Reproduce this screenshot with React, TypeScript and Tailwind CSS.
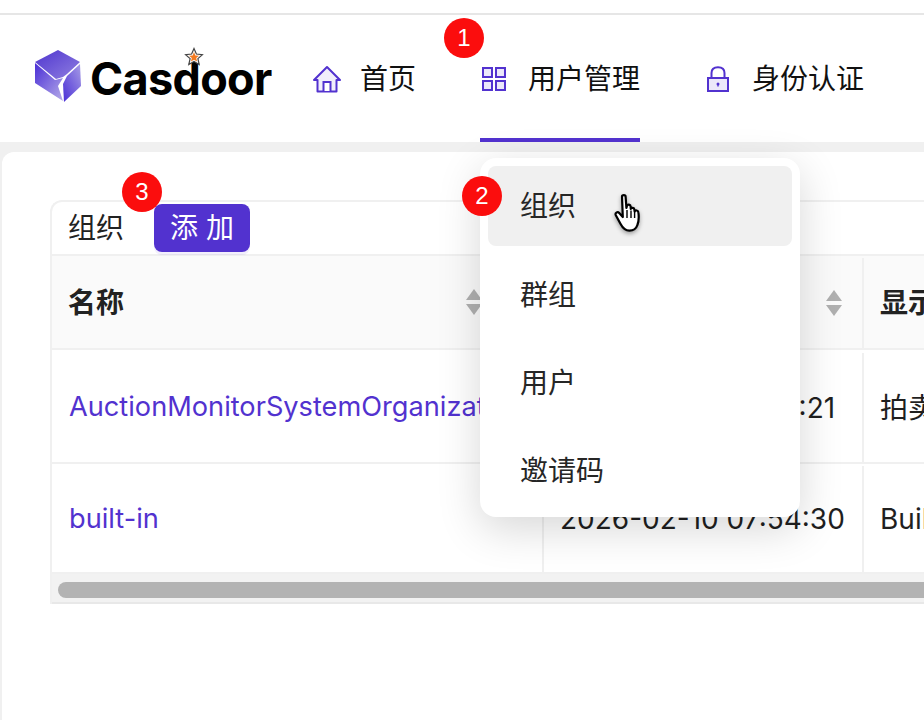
import React from "react";

const cjk = "font-['Inter','Noto_Sans_CJK_SC',sans-serif]";

function Logo() {
  return (
    <div className="relative flex items-center w-[312px] pl-[34px]">
      <svg width="48" height="54" viewBox="0 0 48 54" className="shrink-0 -mt-[3px]">
        <defs>
          <linearGradient id="cubeTop" x1="0" y1="0" x2="1" y2="1">
            <stop offset="0" stopColor="#4f35cf" />
            <stop offset="1" stopColor="#8f7fe0" />
          </linearGradient>
          <linearGradient id="cubeLeft" x1="0" y1="0" x2="1" y2="1">
            <stop offset="0" stopColor="#4a2fd6" />
            <stop offset="1" stopColor="#b5abe8" />
          </linearGradient>
          <linearGradient id="cubeRight" x1="1" y1="0" x2="0" y2="1">
            <stop offset="0" stopColor="#a79ce6" />
            <stop offset="1" stopColor="#4a2fd6" />
          </linearGradient>
        </defs>
        <path d="M1 12 L24 0 L46 12 L33 24 L29 27 L22 29 Z" fill="url(#cubeTop)" />
        <path d="M1 13 L21 30 L29 28 L24 36 L29 51 L1 33 Z" fill="url(#cubeLeft)" />
        <path d="M46 14 L47 36 L30 52 L29 34 L33 26 Z" fill="url(#cubeRight)" />
      </svg>
      <span className="ml-[8px] font-['Inter',sans-serif] font-bold text-[45px] leading-none tracking-[-0.7px] text-black">
        Casdoor
      </span>
      <svg width="20" height="20" viewBox="0 0 20 20" className="absolute left-[184px] top-[-6px]">
        <path
          d="M10 1.5 L12.4 7 L18.4 7.6 L13.9 11.6 L15.2 17.5 L10 14.4 L4.8 17.5 L6.1 11.6 L1.6 7.6 L7.6 7 Z"
          fill="#fff"
          stroke="#444"
          strokeWidth="1.2"
        />
        <path
          d="M10 5 L11.3 8.4 L15 8.7 L12.2 11 L13.1 14.6 L10 12.7 L6.9 14.6 L7.8 11 L5 8.7 L8.7 8.4 Z"
          fill="#f47a20"
        />
      </svg>
    </div>
  );
}

function HouseIcon() {
  return (
    <svg width="30" height="28" viewBox="0 0 30 28" fill="none">
      <path
        d="M15 2 L28 15 H24.5 V26.5 H5.5 V15 H2 Z"
        fill="#f1eefb"
        stroke="#5232cf"
        strokeWidth="2"
        strokeLinejoin="round"
      />
      <path d="M11.5 26 V17 H18.5 V26" fill="#fff" stroke="#5232cf" strokeWidth="2" />
    </svg>
  );
}

function GridIcon() {
  return (
    <svg width="24" height="24" viewBox="0 0 24 24" fill="#ece8fa" stroke="#5232cf" strokeWidth="2">
      <rect x="1" y="1" width="9" height="9" />
      <rect x="14" y="1" width="9" height="9" />
      <rect x="1" y="14" width="9" height="9" />
      <rect x="14" y="14" width="9" height="9" />
    </svg>
  );
}

function LockIcon() {
  return (
    <svg width="22" height="26" viewBox="0 0 22 26" fill="none">
      <path d="M4.5 12 V7 C4.5 3 7 1.2 11 1.2 C15 1.2 17.5 3 17.5 7 V12" stroke="#5232cf" strokeWidth="2" />
      <rect x="1" y="12" width="20" height="13" fill="#ece8fa" stroke="#5232cf" strokeWidth="2" />
      <circle cx="11" cy="18" r="1.5" fill="#5232cf" />
      <rect x="10.4" y="18" width="1.2" height="2.6" fill="#5232cf" />
    </svg>
  );
}

function Badge({ n, className }: { n: number; className: string }) {
  return (
    <div
      className={`absolute w-10 h-10 rounded-full bg-[#fb0d0d] flex items-center justify-center text-white text-[24px] font-['Liberation_Sans',sans-serif] ${className}`}
    >
      {n}
    </div>
  );
}

function SortIcon() {
  return (
    <svg width="18" height="26" viewBox="0 0 18 26" fill="#b0b0b0">
      <path d="M9 0 L17 11 H1 Z" />
      <path d="M1 15 H17 L9 26 Z" />
    </svg>
  );
}

function HandCursor() {
  return (
    <svg width="32" height="42" viewBox="0 0 32 42" className="absolute left-[613px] top-[193px] drop-shadow-[0_2px_2px_rgba(0,0,0,0.35)]">
      <path
        d="M9 3.5 C9 1.6 12.6 1.6 12.6 3.5 L13.4 15 L14 12.8 C14.6 11 17.6 11.4 17.6 13.4 L17.8 16 C18.4 14.2 21.2 14.6 21.4 16.6 L21.6 18.4 C22.4 16.8 25.2 17.4 25.4 19.4 C26 24 25.6 29 24.4 32 C23.4 35 20.6 37.6 16.4 37.6 C12 37.6 9.6 34.8 7.6 31 L2.8 22.2 C1.8 20.2 4.4 18 6.2 20 L9.8 24 Z"
        fill="#fff"
        stroke="#000"
        strokeWidth="2.2"
        strokeLinejoin="round"
      />
      <path d="M14 17 V25 M18 17.5 V25 M21.6 19 V25" stroke="#000" strokeWidth="1.4" />
    </svg>
  );
}

function Row({ h, name, time, display }: { h: string; name: string; time: string; display: string }) {
  return (
    <div className={`grid grid-cols-[492px_320px_1fr] border-b-2 border-[#f0f0f0] ${h}`}>
      <div className="flex items-center pl-[17px] border-r-2 border-[#f0f0f0] text-[#5232cf] text-[27.2px] whitespace-nowrap overflow-hidden">
        {name}
      </div>
      <div className="flex items-center pl-[16px] border-r-2 border-[#f0f0f0] text-[#1f1f1f] whitespace-nowrap">
        {time}
      </div>
      <div className="flex items-center pl-[16px] text-[#1f1f1f] whitespace-nowrap">{display}</div>
    </div>
  );
}

export default function App() {
  return (
    <div className={`relative h-[720px] w-[924px] overflow-hidden bg-white ${cjk} text-[28px]`}>
      {/* top bar */}
      <div className="h-[15px] border-b-2 border-[#e6e6e6]" />
      <header className="flex items-center h-[127px] bg-white text-[#111]">
        <Logo />
        <nav className="flex h-full items-center">
          <div className="flex items-center h-full w-[168px]">
            <HouseIcon />
            <span className="ml-[18px]">首页</span>
          </div>
          <div className="flex items-center h-full w-[160px] pl-[2px] pt-[4px] border-b-4 border-[#5232cf]">
            <GridIcon />
            <span className="ml-[22px] whitespace-nowrap">用户管理</span>
          </div>
          <div className="flex items-center h-full ml-[67px]">
            <LockIcon />
            <span className="ml-[23px] whitespace-nowrap">身份认证</span>
          </div>
        </nav>
      </header>

      {/* page body */}
      <div className="bg-[#f0f0f0] pt-[10px] pl-[2px] h-[578px]">
        <div className="bg-white rounded-tl-xl h-full pt-[48px] pl-[48px]">
          <div className="w-[1000px] border-l-2 border-t-2 border-[#f0f0f0] rounded-tl-xl">
            <div className="flex items-center h-[54px] pl-[16px] border-b-2 border-[#f0f0f0] text-[#222]">
              <span>组织</span>
              <button className="ml-[30px] w-[96px] h-[48px] rounded-lg bg-[#5232cf] text-white shadow-[0_3px_0_rgba(87,52,211,0.08)]">
                添 加
              </button>
            </div>
            <div className="grid grid-cols-[492px_320px_1fr] h-[94px] pt-[2px] bg-[#fafafa] border-b-2 border-[#f0f0f0] font-semibold text-[#222]">
              <div className="flex items-center pl-[16px] border-r-2 border-[#f0f0f0]">
                <span>名称</span>
              </div>
              <div className="flex items-center justify-end pr-[19px] border-r-2 border-[#f0f0f0]">
                <SortIcon />
              </div>
              <div className="flex items-center pl-[16px] whitespace-nowrap">显示名称</div>
            </div>
            <Row h="h-[114px] pt-[3px]" name="AuctionMonitorSystemOrganization" time="2026-02-10 08:41:21" display="拍卖监控系统" />
            <Row h="h-[110px] pt-[2px]" name="built-in" time="2026-02-10 07:54:30" display="Built-in Organization" />
            <div className="h-[30px] bg-[#f2f2f2] border-b-2 border-[#e8e8e8] pt-[8px] pl-[6px]">
              <div className="h-4 w-[950px] rounded-full bg-[#b3b3b3]" />
            </div>
          </div>
        </div>
      </div>

      {/* first column sort icon sits right next to the dropdown */}
      <div className="absolute left-[465px] top-[289px]">
        <SortIcon />
      </div>

      {/* dropdown */}
      <div className="absolute left-[480px] top-[158px] w-[320px] h-[359px] rounded-2xl bg-white p-2 shadow-[0_12px_44px_rgba(0,0,0,0.16)] text-[#262626]">
        <div className="flex items-center h-20 pl-[32px] rounded-lg bg-[#f0f0f0]">组织</div>
        <div className="flex flex-col mt-[5px]">
          <div className="flex items-center h-[88px] pl-[32px]">群组</div>
          <div className="flex items-center h-[88px] pl-[32px]">用户</div>
          <div className="flex items-center h-[88px] pl-[32px]">邀请码</div>
        </div>
      </div>

      <HandCursor />
      <Badge n={1} className="left-[444px] top-[18px]" />
      <Badge n={2} className="left-[462px] top-[176px]" />
      <Badge n={3} className="left-[122px] top-[172px]" />
    </div>
  );
}
